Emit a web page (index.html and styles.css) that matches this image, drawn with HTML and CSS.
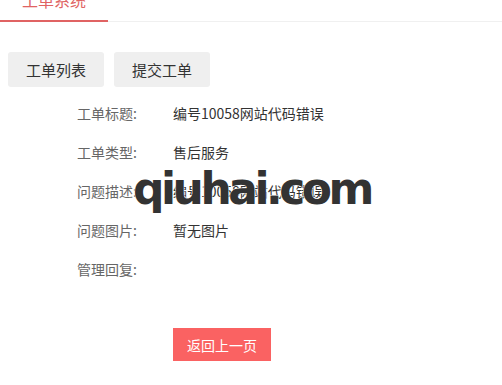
FILE: index.html
```html
<!DOCTYPE html>
<html lang="zh-CN">
<head>
    <meta charset="UTF-8">
    <meta name="viewport" content="width=device-width, initial-scale=1.0">
    <title>工单详情</title>
    <link rel="stylesheet" href="styles.css">
</head>
<body>
    <div class="tabs">
        <div class="tab active">工单系统</div>
    </div>
    <div class="toolbar">
        <button class="tool-button">工单列表</button>
        <button class="tool-button">提交工单</button>
    </div>
    <div class="detail">
        <div class="detail-row">
            <span class="detail-label">工单标题:</span>
            <span class="detail-value">编号10058网站代码错误</span>
        </div>
        <div class="detail-row">
            <span class="detail-label">工单类型:</span>
            <span class="detail-value">售后服务</span>
        </div>
        <div class="detail-row">
            <span class="detail-label">问题描述:</span>
            <span class="detail-value">编号10058网站代码错误</span>
        </div>
        <div class="detail-row">
            <span class="detail-label">问题图片:</span>
            <span class="detail-value">暂无图片</span>
        </div>
        <div class="detail-row">
            <span class="detail-label">管理回复:</span>
            <span class="detail-value"></span>
        </div>
        <div class="detail-actions">
            <button class="back-button">返回上一页</button>
        </div>
    </div>
    <div class="watermark">qiuhai.com</div>
</body>
</html>
```

FILE: styles.css
```css
body {
    font-family: "Noto Sans CJK SC", "Noto Sans", sans-serif;
    margin: 0;
    padding: 0;
    background-color: #fff;
    color: #333;
    position: relative;
    overflow: hidden;
}

.tabs {
    display: flex;
    margin-top: -20px;
    border-bottom: 1px solid #f0f0f0;
}

.tab {
    width: 108px;
    height: 40px;
    line-height: 40px;
    text-align: center;
    font-size: 16px;
    margin-bottom: -1px;
}

.tab.active {
    color: #e06363;
    border-bottom: 2px solid #e06363;
}

.toolbar {
    display: flex;
    gap: 10px;
    padding: 30px 8px 0;
}

.tool-button {
    font-family: inherit;
    font-size: 15px;
    color: #333;
    background-color: #efefef;
    border: none;
    border-radius: 3px;
    width: 96px;
    height: 35px;
    padding: 0;
    cursor: pointer;
}

.detail {
    padding: 7px 0 0 77px;
    font-size: 14px;
}

.detail-row {
    display: flex;
    height: 39px;
    line-height: 39px;
}

.detail-label {
    width: 96px;
    color: #666;
}

.detail-value {
    color: #333;
}

.detail-actions {
    padding: 39px 0 0 96px;
}

.back-button {
    font-family: inherit;
    font-size: 14px;
    color: #fff;
    background-color: #fa6262;
    border: none;
    width: 98px;
    height: 33px;
    padding: 0;
    cursor: pointer;
}

.watermark {
    position: absolute;
    left: 133px;
    top: 159px;
    font-family: "DejaVu Sans", sans-serif;
    font-weight: bold;
    font-size: 44px;
    line-height: 60px;
    letter-spacing: -3.5px;
    color: #333;
    -webkit-text-stroke: 1px #fff;
    paint-order: stroke fill;
}
```
